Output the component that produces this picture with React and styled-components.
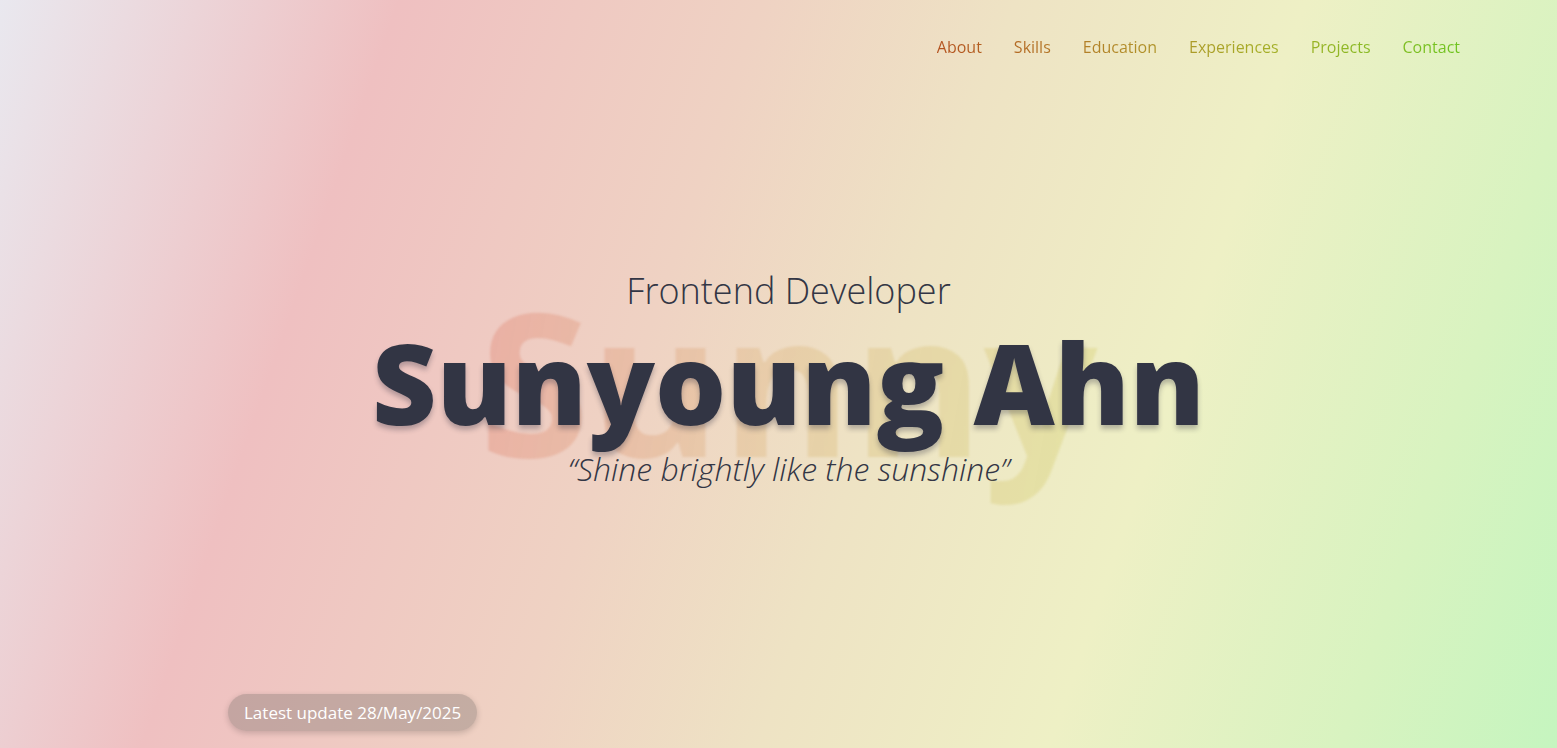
import styled, { createGlobalStyle } from 'styled-components';

const GlobalStyle = createGlobalStyle`
  * { box-sizing: border-box; }
  html, body { margin: 0; padding: 0; }
  body {
    font-family: "Open Sans", "Liberation Sans", sans-serif;
    color: #323544;
  }
`

const links = ['About', 'Skills', 'Education', 'Experiences', 'Projects', 'Contact'];

function App() {
  return (
    <Page>
      <GlobalStyle />
      <Nav>
        <Menu>
          {links.map((l) => (
            <Item key={l}><Link href={`#${l.toLowerCase()}`}>{l}</Link></Item>
          ))}
        </Menu>
      </Nav>
      <Hero>
        <Intro>
          <Role>Frontend Developer</Role>
          <NameWrap>
            <Nickname aria-hidden="true">Sunny</Nickname>
            <Name>Sunyoung Ahn</Name>
          </NameWrap>
          <Motto>“Shine brightly like the sunshine”</Motto>
        </Intro>
      </Hero>
      <Footer>
        <Badge>Latest update 28/May/2025</Badge>
      </Footer>
    </Page>
  )
}

const Page = styled.div`
min-height:100vh;
display:flex;
flex-direction:column;
background:linear-gradient(109deg, #e9e8ef 0%, #efc0c1 22%, #efd2c3 42%, #eee3c4 56%, #eef0c5 72%, #d8f3c0 88%, #c5f5bf 100%);
overflow:hidden;
`
const Nav = styled.nav`
display:flex;
justify-content:flex-end;
padding:36px 97px 0 0;
`
const Menu = styled.ul`
display:flex;
gap:32px;
margin:0;
padding:0;
list-style:none;
background:linear-gradient(90deg, #b4521f 0%, #b28a29 35%, #a6ad27 62%, #6ec41f 100%);
-webkit-background-clip:text;
background-clip:text;
`
const Item = styled.li`
font-size:16px;
line-height:22px;
`
const Link = styled.a`
color:transparent;
text-decoration:none;
`
const Hero = styled.main`
flex:1;
display:flex;
justify-content:center;
align-items:center;
padding:4px 0 0 20px;
`
const Intro = styled.div`
display:flex;
flex-direction:column;
align-items:center;
`
const Role = styled.h2`
margin:0;
font-size:36px;
font-weight:300;
line-height:48px;
color:#333645;
`
const NameWrap = styled.div`
position:relative;
display:flex;
justify-content:center;
`
const Nickname = styled.span`
position:absolute;
left:50%;
top:-71px;
transform:translateX(-50%);
font-size:200px;
font-weight:700;
line-height:272px;
white-space:nowrap;
background:linear-gradient(100deg, rgba(224,118,100,0.32) 0%, rgba(212,160,90,0.24) 45%, rgba(205,200,80,0.27) 100%);
-webkit-background-clip:text;
background-clip:text;
color:transparent;
filter:blur(0.8px);
`
const Name = styled.h1`
position:relative;
margin:0;
font-size:112px;
font-weight:800;
line-height:133px;
color:#323544;
text-shadow:0 4px 5px rgba(40,40,60,0.3);
`
const Motto = styled.p`
margin:0;
font-size:32px;
font-weight:300;
font-style:italic;
line-height:41px;
color:#333645;
`
const Footer = styled.footer`
padding:0 0 17px 228px;
`
const Badge = styled.span`
display:inline-block;
padding:6px 16px;
border-radius:20px;
background:rgba(125,115,110,0.38);
box-shadow:0 2px 6px rgba(0,0,0,0.18);
color:#fff;
font-size:17px;
line-height:25px;
`

export default App;
